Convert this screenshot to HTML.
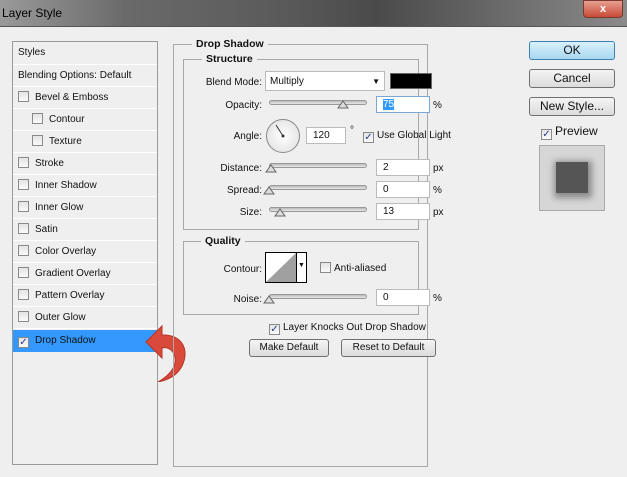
<!DOCTYPE html>
<html><head><meta charset="utf-8"><style>
*{box-sizing:border-box;margin:0;padding:0}
body{width:627px;height:477px;overflow:hidden;background:#efefef;font-family:"Liberation Sans",sans-serif;font-size:10px;color:#111;position:relative}
.a{position:absolute}
.t{margin-top:2px}
.title{left:0;top:0;width:627px;height:27px;background:linear-gradient(90deg,#9a9a9a 0%,#6a6a6a 20%,#5a5a5a 45%,#4a4a4a 60%,#6a6a6a 80%,#8a8a8a 100%);border-bottom:1px solid #555}
.title span{position:absolute;left:2px;top:6px;font-size:12px;color:#000}
.close{left:583px;top:0;width:40px;height:18px;background:linear-gradient(#e8a090,#c84a38);border:1px solid #7a3a30;border-radius:0 0 4px 4px;color:#fff;font-weight:bold;font-size:11px;text-align:center;line-height:16px}
.panel{left:12px;top:41px;width:146px;height:424px;border:1px solid #999;background:#efefef}
.row{position:absolute;left:0;width:144px;height:22px;border-bottom:1px solid #fff;line-height:22px;padding-left:5px}
.cb{display:inline-block;width:11px;height:11px;border:1px solid #8a8a8a;background:linear-gradient(#e4e4e4,#fafafa);vertical-align:-2px;margin-right:6px;position:relative;font-size:10px;line-height:9px;text-align:center;color:#2a3a8a}
.sel{background:#3399ff}
.grp{border:1px solid #a8a8a8}
.lbl{background:#efefef;font-weight:bold;font-size:10.5px;padding:0 4px}
.in{background:#fff;border:1px solid #bbb;height:17px;line-height:15px;padding-left:6px}
.track{height:5px;border-radius:3px;background:linear-gradient(#bbb,#e8e8e8);border:1px solid #999}
.btn{border:1px solid #707070;border-radius:3px;background:linear-gradient(#f4f4f4,#dcdcdc);text-align:center;font-size:11px;line-height:16px}
.r{text-align:right}
</style></head><body>
<div class="a title"><span>Layer Style</span></div>
<div class="a close">x</div>

<div class="a panel">
<div class="row" style="top:0;height:23px;line-height:22px">Styles</div>
<div class="row" style="top:23px">Blending Options: Default</div>
<div class="row" style="top:45px"><span class="cb"></span>Bevel &amp; Emboss</div>
<div class="row" style="top:67px;padding-left:19px"><span class="cb"></span>Contour</div>
<div class="row" style="top:89px;padding-left:19px"><span class="cb"></span>Texture</div>
<div class="row" style="top:111px"><span class="cb"></span>Stroke</div>
<div class="row" style="top:133px"><span class="cb"></span>Inner Shadow</div>
<div class="row" style="top:155px"><span class="cb"></span>Inner Glow</div>
<div class="row" style="top:177px"><span class="cb"></span>Satin</div>
<div class="row" style="top:199px"><span class="cb"></span>Color Overlay</div>
<div class="row" style="top:221px"><span class="cb"></span>Gradient Overlay</div>
<div class="row" style="top:243px"><span class="cb"></span>Pattern Overlay</div>
<div class="row" style="top:265px"><span class="cb"></span>Outer Glow</div>
<div class="row sel" style="top:288px;height:22px;border:none"><span class="cb">✓</span>Drop Shadow</div>
</div>
<svg class="a" style="left:144px;top:322px" width="50" height="60" viewBox="0 0 50 60"><path d="M2 20 L18 4 L18 13 C38 12 46 28 38 44 C33 54 24 58 14 60 C28 52 34 42 30 32 C27 26 22 25 18 26 L18 36 Z" fill="#d94a3a" stroke="#b83428" stroke-width="1"/></svg>

<div class="a grp" style="left:173px;top:44px;width:255px;height:423px"></div>
<div class="a lbl" style="left:192px;top:38px">Drop Shadow</div>
<div class="a grp" style="left:183px;top:59px;width:236px;height:171px"></div>
<div class="a lbl" style="left:202px;top:53px">Structure</div>

<div class="a r t" style="left:190px;top:75px;width:72px">Blend Mode:</div>
<div class="a in" style="left:265px;top:71px;width:120px;height:20px;line-height:19px;padding-left:4px">Multiply<span style="position:absolute;right:4px;top:0;font-size:8px">▼</span></div>
<div class="a" style="left:390px;top:73px;width:42px;height:16px;background:#000;border:1px solid #666"></div>

<div class="a r t" style="left:190px;top:98px;width:72px">Opacity:</div>
<div class="a track" style="left:269px;top:100px;width:98px"></div>
<svg class="a" style="left:337px;top:99px" width="12" height="10"><path d="M1 9 L6 2 L11 9Z" fill="#ddd" stroke="#666"/></svg>
<div class="a in" style="left:376px;top:96px;width:54px;border-color:#7aa7d6"><span style="background:#3399ff;color:#fff">75</span></div>
<div class="a t" style="left:433px;top:98px">%</div>

<div class="a r t" style="left:190px;top:129px;width:72px">Angle:</div>
<div class="a" style="left:266px;top:119px;width:34px;height:34px;border-radius:50%;border:1px solid #888;background:radial-gradient(#fff,#ddd)"></div>
<svg class="a" style="left:266px;top:119px" width="34" height="34"><line x1="17" y1="17" x2="10" y2="6" stroke="#333"/><circle cx="17" cy="17" r="1.5" fill="#333"/></svg>
<div class="a in" style="left:306px;top:127px;width:40px">120</div>
<div class="a" style="left:350px;top:125px">°</div>
<div class="a" style="left:363px;top:130px"><span class="cb" style="margin-right:3px">✓</span>Use Global Light</div>

<div class="a r t" style="left:190px;top:161px;width:72px">Distance:</div>
<div class="a track" style="left:269px;top:163px;width:98px"></div>
<svg class="a" style="left:265px;top:163px" width="12" height="10"><path d="M1 9 L6 2 L11 9Z" fill="#ddd" stroke="#666"/></svg>
<div class="a in" style="left:376px;top:159px;width:54px">2</div>
<div class="a t" style="left:433px;top:161px">px</div>

<div class="a r t" style="left:190px;top:183px;width:72px">Spread:</div>
<div class="a track" style="left:269px;top:185px;width:98px"></div>
<svg class="a" style="left:263px;top:185px" width="12" height="10"><path d="M1 9 L6 2 L11 9Z" fill="#ddd" stroke="#666"/></svg>
<div class="a in" style="left:376px;top:181px;width:54px">0</div>
<div class="a t" style="left:433px;top:183px">%</div>

<div class="a r t" style="left:190px;top:205px;width:72px">Size:</div>
<div class="a track" style="left:269px;top:207px;width:98px"></div>
<svg class="a" style="left:274px;top:207px" width="12" height="10"><path d="M1 9 L6 2 L11 9Z" fill="#ddd" stroke="#666"/></svg>
<div class="a in" style="left:376px;top:203px;width:54px">13</div>
<div class="a t" style="left:433px;top:205px">px</div>

<div class="a grp" style="left:183px;top:241px;width:236px;height:74px"></div>
<div class="a lbl" style="left:201px;top:235px">Quality</div>
<div class="a r t" style="left:190px;top:262px;width:72px">Contour:</div>
<div class="a" style="left:265px;top:252px;width:42px;height:31px;border:1px solid #000;background:#fff"></div>
<svg class="a" style="left:266px;top:253px" width="30" height="29"><path d="M0 29 L30 0 L30 29Z" fill="#a0a0a0"/></svg>
<div class="a" style="left:296px;top:253px;width:1px;height:29px;background:#000"></div>
<div class="a" style="left:298px;top:262px;font-size:7px">▼</div>
<div class="a" style="left:320px;top:262px"><span class="cb" style="margin-right:3px"></span>Anti-aliased</div>
<div class="a r t" style="left:190px;top:292px;width:72px">Noise:</div>
<div class="a track" style="left:269px;top:294px;width:98px"></div>
<svg class="a" style="left:263px;top:294px" width="12" height="10"><path d="M1 9 L6 2 L11 9Z" fill="#ddd" stroke="#666"/></svg>
<div class="a in" style="left:376px;top:289px;width:54px">0</div>
<div class="a t" style="left:433px;top:291px">%</div>

<div class="a" style="left:269px;top:322px"><span class="cb" style="margin-right:3px">✓</span>Layer Knocks Out Drop Shadow</div>
<div class="a btn" style="left:249px;top:339px;width:80px;height:18px;font-size:10px">Make Default</div>
<div class="a btn" style="left:341px;top:339px;width:95px;height:18px;font-size:10px">Reset to Default</div>

<div class="a btn" style="left:529px;top:41px;width:86px;height:19px;background:linear-gradient(#d8f0fc,#a8d8f0);border-color:#3c7fb1;font-size:12px">OK</div>
<div class="a btn" style="left:529px;top:69px;width:86px;height:19px;font-size:12px">Cancel</div>
<div class="a btn" style="left:529px;top:97px;width:86px;height:19px;font-size:12px">New Style...</div>
<div class="a" style="left:541px;top:124px;font-size:12px"><span class="cb" style="margin-right:3px">✓</span>Preview</div>
<div class="a" style="left:539px;top:145px;width:66px;height:66px;background:#d6d6d6;border:1px solid #aaa"></div>
<div class="a" style="left:556px;top:162px;width:32px;height:31px;background:#555;box-shadow:1px 2px 6px 3px rgba(0,0,0,.35)"></div>
</body></html>
